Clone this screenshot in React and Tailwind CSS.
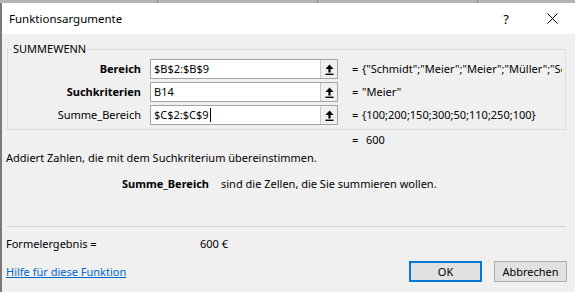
import React from "react";

function RefIcon() {
  return (
    <svg width="9" height="11" viewBox="0 0 9 11" className="block">
      <path d="M4.5 0.5 L8.5 5 L5.6 5 L5.6 8.5 L3.4 8.5 L3.4 5 L0.5 5 Z" fill="#000" />
      <rect x="0.5" y="9.6" width="8" height="1.4" fill="#000" />
    </svg>
  );
}

function ArgRow({ label, bold, value, result, caret }) {
  return (
    <div className="flex items-center h-[20px] min-w-0">
      <div className={`w-[133px] shrink-0 text-right ${bold ? "font-bold" : ""}`}>{label}</div>
      <div className="ml-[9px] w-[188px] shrink-0 h-[20px] flex border border-[#a3a3a3] bg-white">
        <div className="flex-1 flex items-center pl-[3px] whitespace-nowrap">
          {value}
          {caret && <span className="inline-block w-[1px] h-[14px] bg-black ml-[1px]" />}
        </div>
        <div className="w-[17px] h-[18px] bg-[#f0f0f0] border-l border-[#c8c8c8] flex items-center justify-center">
          <RefIcon />
        </div>
      </div>
      <div className="ml-[14px] w-[10px] shrink-0">=</div>
      <div className="flex-1 min-w-0 overflow-hidden whitespace-nowrap">{result}</div>
    </div>
  );
}

export default function App() {
  return (
    <div
      className="w-[575px] h-[292px] overflow-hidden bg-[#f0f0f0] flex flex-col text-[11px] leading-[16px] text-black"
      style={{ fontFamily: '"Noto Sans", "Open Sans", sans-serif' }}
    >
      <div className="h-[3px] bg-[#b4b4b4] flex">
        <div className="w-[158px] border-r border-[#8c8c8c]" />
        <div className="w-[160px] border-r border-[#8c8c8c]" />
        <div className="w-[160px] border-r border-[#8c8c8c]" />
      </div>
      <div className="flex-1 flex flex-col border-l-2 border-[#7a7a7a] min-w-0">
        <div className="h-[31px] bg-white flex items-center">
          <div className="pl-[7px] flex-1 text-[11.5px]">Funktionsargumente</div>
          <div className="w-[46px] text-center text-[13px]">?</div>
          <div className="w-[46px] flex justify-center">
            <svg width="11" height="11" viewBox="0 0 11 11">
              <path d="M0.5 0.5 L10.5 10.5 M10.5 0.5 L0.5 10.5" stroke="#000" strokeWidth="1" />
            </svg>
          </div>
        </div>
        <div className="flex-1 flex flex-col pt-[7px] min-w-0">
          <fieldset className="ml-[5px] mr-[9px] min-w-0 border border-[#dcdcdc] pt-[2px] pb-[4px] pr-[3px] flex flex-col gap-[3px]">
            <legend className="ml-[4px] px-[1px]">SUMMEWENN</legend>
            <ArgRow label="Bereich" bold value="$B$2:$B$9" result={'{"Schmidt";"Meier";"Meier";"Müller";"Schmidt";"Meier";"Müller";"Meier"}'} />
            <ArgRow label="Suchkriterien" bold value="B14" result={'"Meier"'} />
            <ArgRow label="Summe_Bereich" value="$C$2:$C$9" caret result="{100;200;150;300;50;110;250;100}" />
          </fieldset>
          <div className="flex mt-[2px]">
            <div className="ml-[350px] w-[14px]">=</div>
            <div>600</div>
          </div>
          <div className="mt-[2px] ml-[4px]">Addiert Zahlen, die mit dem Suchkriterium übereinstimmen.</div>
          <div className="mt-[10px] flex">
            <div className="ml-[120px] font-bold">Summe_Bereich</div>
            <div className="ml-[12px]">sind die Zellen, die Sie summieren wollen.</div>
          </div>
          <div className="mt-[34px] ml-[4px] mr-[9px] h-[1px] bg-[#d4d4d4]" />
          <div className="mt-[9px] flex">
            <div className="ml-[4px] w-[194px]">Formelergebnis =</div>
            <div>600 €</div>
          </div>
          <div className="mt-[9px] flex items-center">
            <a className="ml-[4px] text-[#0066cc] underline flex-1">Hilfe für diese Funktion</a>
            <button className="w-[73px] h-[21px] bg-[#e1e1e1] border-2 border-[#0078d7]">OK</button>
            <button className="ml-[12px] mr-[8px] w-[73px] h-[21px] bg-[#e1e1e1] border border-[#adadad]">Abbrechen</button>
          </div>
        </div>
      </div>
    </div>
  );
}
